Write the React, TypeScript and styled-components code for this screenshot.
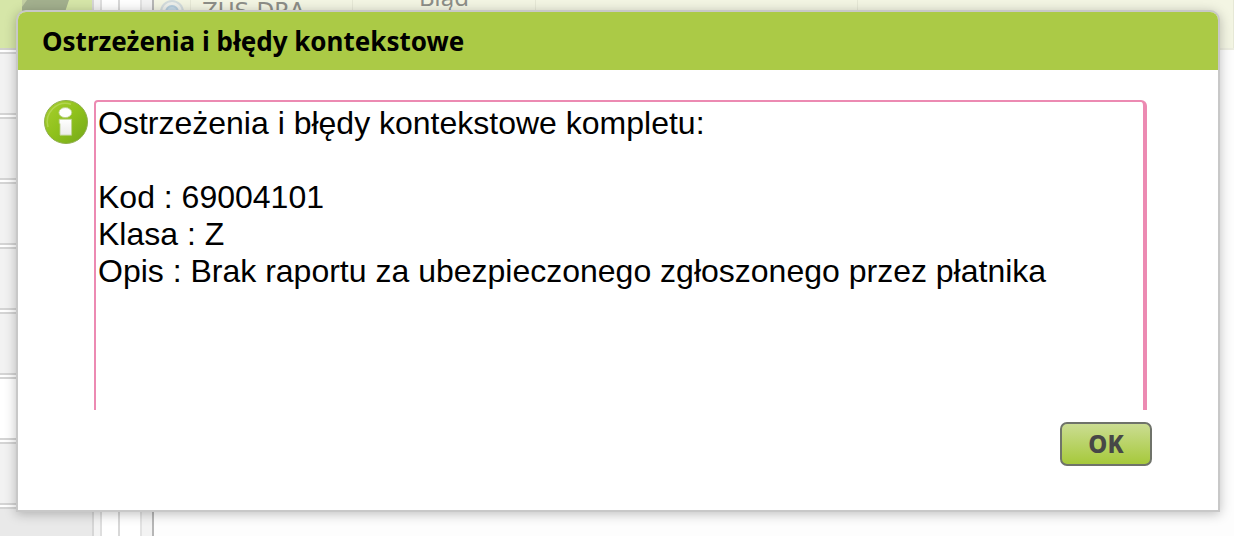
import React from "react";
import styled, { createGlobalStyle } from "styled-components";

const GlobalStyle = createGlobalStyle`
  * { box-sizing: border-box; }
  html, body { margin: 0; overflow: hidden; background: #fff; }
  body { font-family: "Noto Sans", "Open Sans", sans-serif; }
  svg { display: block; flex: none; }
`;

const Page = styled.div`
  position: relative;
  display: flex;
  height: 100vh;
  overflow: hidden;
`;

const Sidebar = styled.aside`
  flex: none;
  display: flex;
  flex-direction: column;
  gap: 2px;
  width: 94px;
  height: 100%;
  overflow: hidden;
  border-right: 2px solid #d6d6d6;
`;

const SidebarHead = styled.div`
  flex: none;
  height: 50px;
  padding-left: 22px;
  background: #d6e6a8;
  border-bottom: 2px solid #d0d0cc;
`;

const SidebarItem = styled.div<{ $tone?: string }>`
  flex: none;
  height: 63px;
  background: ${(p) => p.$tone || "#f2f2f2"};
  border-top: 2px solid #d4d4d4;
  border-bottom: 2px solid #d4d4d4;
`;

const Gutter = styled.div<{ $width: number; $fill: string; $line: string }>`
  flex: none;
  width: ${(p) => p.$width}px;
  background: ${(p) => p.$fill};
  border-right: 2px solid ${(p) => p.$line};
`;

const Content = styled.main`
  flex: 1;
  min-width: 0;
  background: #fdfdfd;
`;

const GridRow = styled.div`
  display: flex;
  height: 62px;
  margin-top: -12px;
  background: #f3f5e3;
  border-bottom: 2px solid #ebecdf;
`;

const Cell = styled.div<{ $width?: number; $center?: boolean }>`
  flex: ${(p) => (p.$width ? "none" : "1")};
  width: ${(p) => (p.$width ? p.$width + "px" : "auto")};
  padding: 0 11px;
  border-right: 1px solid #e6e8d6;
  color: #8d8e88;
  font-size: 24px;
  line-height: 18px;
  text-align: ${(p) => (p.$center ? "center" : "left")};
`;

const NameCell = styled(Cell)`
  font-family: "DejaVu Sans", sans-serif;
  font-size: 23px;
  line-height: 46px;
`;

const IconCell = styled(Cell)`
  padding: 12px 0 0 6px;
`;

const Dialog = styled.section`
  position: absolute;
  top: 10px;
  left: 16px;
  right: 14px;
  background: #fff;
  border: 2px solid #c8c8c8;
  border-radius: 10px 10px 0 0;
  box-shadow: 0 2px 12px rgba(0, 0, 0, 0.25);
`;

const Title = styled.h1`
  margin: 0;
  padding: 0 24px;
  background: #abca46;
  border-radius: 8px 8px 0 0;
  color: #000;
  font-size: 26px;
  font-weight: 700;
  line-height: 58px;
`;

const Message = styled.div`
  display: flex;
  align-items: flex-start;
  gap: 6px;
  padding: 30px 71px 12px 26px;
`;

const MessageText = styled.textarea`
  flex: 1;
  min-width: 0;
  height: 310px;
  margin: 0;
  padding: 3px 2px;
  resize: none;
  overflow: hidden;
  outline: none;
  color: #000;
  background: #fff;
  border: 2px solid #ec8ab2;
  border-right-width: 4px;
  border-bottom: 0;
  border-radius: 4px 6px 0 0;
  font-family: "Liberation Sans", Arial, sans-serif;
  font-size: 32px;
  line-height: 37px;
`;

const Actions = styled.div`
  display: flex;
  justify-content: flex-end;
  padding: 0 66px 44px;
`;

const OkButton = styled.button`
  width: 92px;
  height: 44px;
  padding: 0;
  border: 2px solid #6f736a;
  border-radius: 7px;
  background: linear-gradient(#cbdd92, #a6c93b);
  color: #474747;
  font-family: inherit;
  font-size: 24px;
  font-weight: 800;
  line-height: 40px;
`;

const InfoIcon = () => (
  <svg width="44" height="44" viewBox="0 0 44 44" role="img" aria-label="Informacja">
    <defs>
      <linearGradient id="ball" x1="0" y1="0" x2="1" y2="1">
        <stop offset="0" stopColor="#a9d02f" />
        <stop offset="0.5" stopColor="#8fc11c" />
        <stop offset="1" stopColor="#74a81a" />
      </linearGradient>
      <linearGradient id="stem" x1="0" y1="0" x2="0" y2="1">
        <stop offset="0" stopColor="#fff" />
        <stop offset="1" stopColor="#ececea" />
      </linearGradient>
    </defs>
    <circle cx="22" cy="22" r="21.5" fill="url(#ball)" stroke="#8fae4c" />
    <path d="M4 27A18.5 18.5 0 0 1 27 4.2" fill="none" stroke="#c2de6c" strokeWidth="1.5" opacity="0.6" />
    <ellipse cx="21.3" cy="12.6" rx="6.4" ry="5" fill="#fff" stroke="#b9cf85" strokeWidth="0.8" />
    <path d="M15.2 19.2H27.6V35.2H16V23.6H15.2Z" fill="url(#stem)" stroke="#b9cf85" strokeWidth="0.8" />
  </svg>
);

const text = `Ostrzeżenia i błędy kontekstowe kompletu:

Kod : 69004101
Klasa : Z
Opis : Brak raportu za ubezpieczonego zgłoszonego przez płatnika`;

const itemTones = ["", "", "", "", "", "#fff", "", "#e9e9e9"];

export default function App() {
  return (
    <>
      <GlobalStyle />
      <Page>
        <Sidebar>
          <SidebarHead>
            <svg width="48" height="12" viewBox="0 0 48 12" aria-hidden="true">
              <path d="M0 0H47L43 12H0Z" fill="#a3b08e" />
              <path d="M0 7L5 0H0Z" fill="#c3cfa2" />
            </svg>
          </SidebarHead>
          {itemTones.map((tone, i) => (
            <SidebarItem key={i} $tone={tone} />
          ))}
        </Sidebar>
        <Gutter $width={8} $fill="#f3f3f3" $line="#dedede" />
        <Gutter $width={18} $fill="#fff" $line="#d8d8d8" />
        <Gutter $width={22} $fill="#fff" $line="#e2e2e2" />
        <Gutter $width={12} $fill="#f3f3f3" $line="#b6b6b6" />
        <Content>
          <GridRow>
            <IconCell $width={37}>
              <svg width="26" height="24" viewBox="0 0 26 24" aria-hidden="true">
                <circle cx="12" cy="12" r="11" fill="#eef0ec" stroke="#d3dcdd" strokeWidth="2" />
                <circle cx="12" cy="12" r="6" fill="#c5d9e6" stroke="#b4cddd" strokeWidth="2" />
              </svg>
            </IconCell>
            <NameCell $width={162}>ZUS DRA</NameCell>
            <Cell $width={183} $center>Błąd</Cell>
            <Cell $width={322} />
            <Cell />
          </GridRow>
        </Content>
        <Dialog role="dialog" aria-labelledby="dialog-title">
          <Title id="dialog-title">Ostrzeżenia i błędy kontekstowe</Title>
          <Message>
            <InfoIcon />
            <MessageText readOnly aria-labelledby="dialog-title" spellCheck={false} value={text} />
          </Message>
          <Actions>
            <OkButton type="button">OK</OkButton>
          </Actions>
        </Dialog>
      </Page>
    </>
  );
}
